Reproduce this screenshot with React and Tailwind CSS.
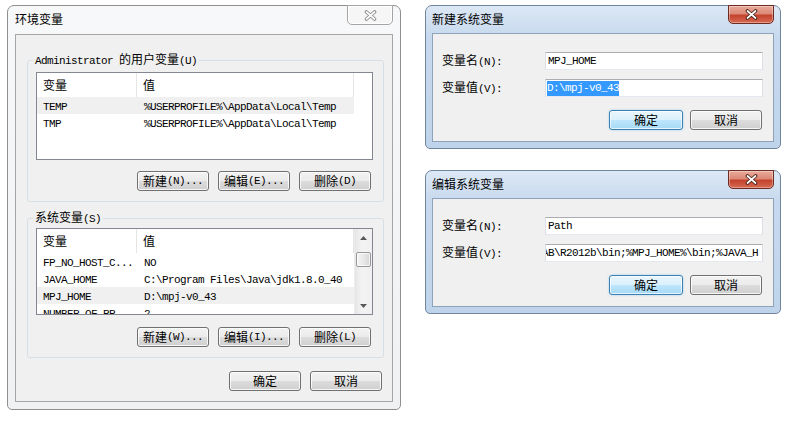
import React from "react";

const cjk = "font-['Noto_Sans_CJK_SC',sans-serif] text-[12px] leading-[16px] text-black";

function M({ children, className = "" }) {
  return (
    <span className={`font-['Liberation_Mono','Noto_Sans_CJK_SC',monospace] text-[11px] tracking-[-0.6px] ${className}`}>
      {children}
    </span>
  );
}

function CloseBtn({ active }) {
  return (
    <div
      className={
        active
          ? "w-[46px] h-[19px] -mt-px rounded-b-[5px] border border-[#6e2b22] bg-[linear-gradient(180deg,#e9ab9c_0%,#dc8876_45%,#c4432d_55%,#d66a52_100%)] shadow-[inset_0_0_0_1px_rgba(255,255,255,0.35)] flex items-center justify-center"
          : "w-[46px] h-[20px] -mt-px rounded-b-[5px] border border-[#a5a5a5] bg-[#f6f6f6] shadow-[inset_0_0_0_1px_#ffffff] flex items-center justify-center"
      }
    >
      <svg width="13" height="11" viewBox="0 0 13 11">
        <path d="M2.5 2 L10.5 9 M10.5 2 L2.5 9" stroke={active ? "#4a2119" : "#8a8a8a"} strokeWidth="3.6" strokeLinecap="round" fill="none" />
        <path d="M2.5 2 L10.5 9 M10.5 2 L2.5 9" stroke={active ? "#ffffff" : "#fbfbfb"} strokeWidth="1.7" strokeLinecap="round" fill="none" />
      </svg>
    </div>
  );
}

function Btn({ children, def }) {
  return (
    <button
      type="button"
      className={`${cjk} h-[20px] rounded-[3px] border flex items-center justify-center ${
        def
          ? "w-[74px] border-[#3c7fb1] bg-[linear-gradient(180deg,#eaf6fd_0%,#d9f0fc_50%,#bee6fd_50%,#a7d9f5_100%)] shadow-[inset_0_0_0_1px_rgba(255,255,255,0.7),0_0_2px_#8cc8ef]"
          : "w-[72px] border-[#707070] bg-[linear-gradient(180deg,#f2f2f2_0%,#ebebeb_50%,#dddddd_50%,#cfcfcf_100%)] shadow-[inset_0_0_0_1px_rgba(255,255,255,0.8)]"
      }`}
    >
      {children}
    </button>
  );
}

function Header() {
  return (
    <div className="flex h-[24px] bg-white">
      <div className={`${cjk} w-[100px] pl-[6px] flex items-center border-r border-[#e5e5e5]`}>变量</div>
      <div className={`${cjk} w-[217px] pl-[6px] flex items-center border-r border-[#e5e5e5]`}>值</div>
    </div>
  );
}

function Row({ name, value, sel }) {
  return (
    <div className={`flex h-[17px] w-[317px] items-center leading-[17px] ${sel ? "bg-[#f0f0f0]" : ""}`}>
      <div className="w-[100px] pl-[6px] whitespace-nowrap overflow-hidden">
        <M>{name}</M>
      </div>
      <div className="w-[217px] pl-[7px] whitespace-nowrap overflow-hidden">
        <M>{value}</M>
      </div>
    </div>
  );
}

function Arrow({ up }) {
  return (
    <svg width="7" height="4" viewBox="0 0 7 4">
      <polygon points={up ? "0,4 7,4 3.5,0" : "0,0 7,0 3.5,4"} fill="#5a5a5a" />
    </svg>
  );
}

function EnvDialog() {
  const userRows = [
    ["TEMP", "%USERPROFILE%\\AppData\\Local\\Temp", true],
    ["TMP", "%USERPROFILE%\\AppData\\Local\\Temp", false],
  ];
  const sysRows = [
    ["FP_NO_HOST_C...", "NO", false],
    ["JAVA_HOME", "C:\\Program Files\\Java\\jdk1.8.0_40", false],
    ["MPJ_HOME", "D:\\mpj-v0_43", true],
    ["NUMBER_OF_PR", "2", false],
  ];

  return (
    <div className="w-[394px] flex flex-col rounded-t-[7px] rounded-b-[5px] border border-[#8f8f8f] bg-[linear-gradient(180deg,#f7f8f9_0%,#eff1f3_100%)] px-[7px] pb-[7px]">
      <div className="h-[28px] flex items-start justify-between">
        <span className={`${cjk} pt-[5px]`}>环境变量</span>
        <CloseBtn active={false} />
      </div>

      <div className="border border-[#a5a5a5] bg-[#f0f0f0] flex flex-col pb-[10px]">
        {/* user variables */}
        <fieldset className="ml-[11px] mr-[8px] mt-[16px] border border-[#d5dfe5] rounded-[3px] pb-[10px]">
          <legend className={`${cjk} ml-[5px] px-[2px]`}>
            <M>Administrator </M>的用户变量<M>(U)</M>
          </legend>
          <div className="ml-[8px] mr-[10px] mt-[3px] h-[88px] border border-[#828790] bg-white">
            <Header />
            {userRows.map(([n, v, s]) => (
              <Row key={n} name={n} value={v} sel={s} />
            ))}
          </div>
          <div className="flex justify-end gap-[9px] mt-[11px] mr-[12px]">
            <Btn>新建<M>(N)...</M></Btn>
            <Btn>编辑<M>(E)...</M></Btn>
            <Btn>删除<M>(D)</M></Btn>
          </div>
        </fieldset>

        {/* system variables */}
        <fieldset className="ml-[11px] mr-[8px] mt-[7px] border border-[#d5dfe5] rounded-[3px] pb-[10px]">
          <legend className={`${cjk} ml-[5px] px-[2px]`}>
            系统变量<M>(S)</M>
          </legend>
          <div className="ml-[8px] mr-[10px] mt-[1px] h-[87px] border border-[#828790] bg-white flex overflow-hidden">
            <div className="w-[317px] overflow-hidden">
              <Header />
              {sysRows.map(([n, v, s]) => (
                <Row key={n} name={n} value={v} sel={s} />
              ))}
            </div>
            <div className="w-[18px] flex flex-col items-center bg-[linear-gradient(90deg,#e6e6e6_0%,#f3f3f3_40%,#f0f0f0_100%)] border-l border-[#ececec]">
              <div className="h-[17px] w-full flex items-center justify-center">
                <Arrow up />
              </div>
              <div className="mt-[6px] h-[15px] w-[15px] rounded-[2px] border border-[#989898] bg-[linear-gradient(90deg,#f4f4f4_0%,#e8e8e8_50%,#d6d6d6_100%)] shadow-[inset_0_0_0_1px_rgba(255,255,255,0.7)]" />
              <div className="flex-1" />
              <div className="h-[17px] w-full flex items-center justify-center">
                <Arrow />
              </div>
            </div>
          </div>
          <div className="flex justify-end gap-[9px] mt-[12px] mr-[12px]">
            <Btn>新建<M>(W)...</M></Btn>
            <Btn>编辑<M>(I)...</M></Btn>
            <Btn>删除<M>(L)</M></Btn>
          </div>
        </fieldset>

        <div className="flex justify-end gap-[9px] mt-[13px] mr-[10px]">
          <Btn>确定</Btn>
          <Btn>取消</Btn>
        </div>
      </div>
    </div>
  );
}

function SysVarDialog({ title, name, value }) {
  return (
    <div className="w-[356px] h-[144px] flex flex-col rounded-t-[7px] rounded-b-[5px] border border-[#71859c] bg-[linear-gradient(180deg,#dce8f5_0%,#c7d9ee_22%,#bfd4ea_100%)] px-[6px] pb-[6px]">
      <div className="h-[27px] flex items-start justify-between">
        <span className={`${cjk} pt-[5px]`}>{title}</span>
        <CloseBtn active />
      </div>
      <div className="flex-1 border border-[#8ea3ba] bg-[#f0f0f0] flex flex-col pl-[9px] pr-[10px] pt-[18px]">
        <div className="flex items-center h-[18px]">
          <div className={`${cjk} w-[103px]`}>
            变量名<M>(N):</M>
          </div>
          <div className="flex-1 h-[18px] border border-[#abadb3] border-b-[#e3e9ef] border-x-[#dbdfe6] bg-white flex items-center pl-[2px] overflow-hidden whitespace-nowrap">
            <M>{name}</M>
          </div>
        </div>
        <div className="flex items-center h-[18px] mt-[9px]">
          <div className={`${cjk} w-[103px]`}>
            变量值<M>(V):</M>
          </div>
          <div className="flex-1 h-[18px] border border-[#abadb3] border-b-[#e3e9ef] border-x-[#dbdfe6] bg-white flex items-center overflow-hidden whitespace-nowrap">
            {value}
          </div>
        </div>
        <div className="flex justify-end gap-[7px] mt-[13px] mr-[1px]">
          <Btn def>确定</Btn>
          <Btn>取消</Btn>
        </div>
      </div>
    </div>
  );
}

export default function App() {
  return (
    <div className="w-[785px] h-[430px] bg-white flex items-start gap-[24px] pl-[7px] pt-[5px] overflow-hidden">
      <EnvDialog />
      <div className="flex flex-col gap-[21px]">
        <SysVarDialog
          title="新建系统变量"
          name="MPJ_HOME"
          value={
            <span className="ml-[1px] bg-[#3399ff] leading-[15px] flex">
              <M className="text-white">D:\mpj-v0_43</M>
            </span>
          }
        />
        <SysVarDialog
          title="编辑系统变量"
          name="Path"
          value={<M className="ml-[-10px]">LAB\R2012b\bin;%MPJ_HOME%\bin;%JAVA_H</M>}
        />
      </div>
    </div>
  );
}
